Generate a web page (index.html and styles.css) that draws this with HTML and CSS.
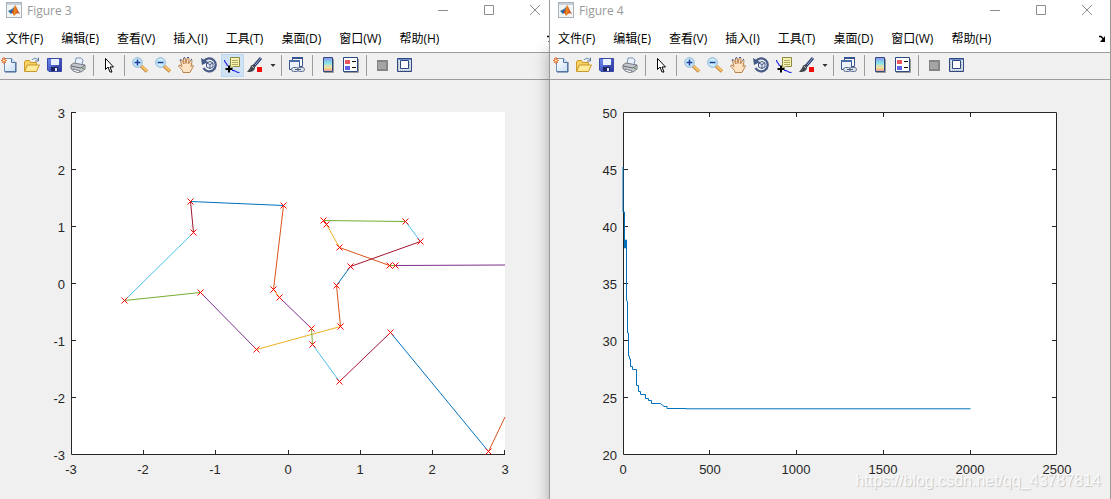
FILE: index.html
```html
<!DOCTYPE html>
<html lang="zh-CN">
<head>
<meta charset="utf-8">
<title>Figures</title>
<link rel="stylesheet" href="styles.css">
</head>
<body>
<svg class="sprite" aria-hidden="true">
  <defs>
    <linearGradient id="g-page" x1="0" y1="0" x2="1" y2="1"><stop offset="0" stop-color="#fff"/><stop offset="1" stop-color="#c9e0f5"/></linearGradient>
    <linearGradient id="g-bar" x1="0" y1="0" x2="0" y2="1"><stop offset="0" stop-color="#8d8fee"/><stop offset=".4" stop-color="#86e3ea"/><stop offset=".7" stop-color="#f4e39a"/><stop offset="1" stop-color="#f3a08c"/></linearGradient>
    <linearGradient id="g-save" x1="0" y1="0" x2="1" y2="1"><stop offset="0" stop-color="#6f8df0"/><stop offset="1" stop-color="#25319b"/></linearGradient>
    <linearGradient id="g-logo" x1="0" y1="0" x2="1" y2="0"><stop offset="0" stop-color="#8b1a10"/><stop offset=".4" stop-color="#f08a24"/><stop offset="1" stop-color="#b5331a"/></linearGradient>
  </defs>
  <symbol id="i-logo" viewBox="0 0 16 16"><rect x=".5" y=".5" width="15" height="15" fill="#f3f5f7" stroke="#a9b0b8"/><path d="M1 1h14v2H1z" fill="#c7d0da"/><path d="M2 9l4-2 3-3-1 5-3 3z" fill="#2b6fa8"/><path d="M5 10l2-2 2-5c2 2 3 7 5 9-2-1-3-1-4 0l-2 2c-1-2-1-3-3-4z" fill="url(#g-logo)"/></symbol>
  <symbol id="i-new" viewBox="0 0 16 16"><path d="M3.500 1.500h7l4 4v9h-11z" fill="url(#g-page)" stroke="#6f8fb8"/><path d="M15 5v10H4" fill="none" stroke="#3d5f90"/><path d="M10.500 1.500v4h4" fill="#dbe9f7" stroke="#4f74a8"/><path d="M3 0v7M0 3.500h6M1 1l4 5M5 1L1 6" stroke="#e0743a" stroke-width="1"/><circle cx="3" cy="3.500" r="1.500" fill="#fff0a8" stroke="#e0743a"/></symbol>
  <symbol id="i-open" viewBox="0 0 16 16"><path d="M.5 14V4.500l1-1h4l1 2h6V14z" fill="#f7cf63" stroke="#c99a2a"/><path d="M.5 14.500l3-6.500h12l-3 6.500z" fill="#ffeb9a" stroke="#c99a2a"/><path d="M8 3c2-2.500 4-2 6 0M14.500.500V4H11" fill="none" stroke="#5b7ba5"/></symbol>
  <symbol id="i-save" viewBox="0 0 16 16"><path d="M.5 1.500h14v13H2L.5 13z" fill="url(#g-save)" stroke="#3a48a5"/><path d="M4 2h8v6H4z" fill="#eaf1ff"/><path d="M4 10h7v4H4z" fill="#1d2560"/><path d="M8 11h2v3H8z" fill="#e9edfa"/></symbol>
  <symbol id="i-print" viewBox="0 0 16 16"><path d="M5 7l1-6h5l2 2-1 5z" fill="#e8f1fc" stroke="#7f93b3"/><path d="M1 8l3-2 11 2v4l-4 3-10-3z" fill="#c3c6cb" stroke="#777b82"/><path d="M1 9l10 2 4-3" fill="none" stroke="#666b73"/><path d="M3 12l7 2-1 2-6-2z" fill="#fff" stroke="#7b7f86"/><path d="M12 11h2v1h-2z" fill="#6eaf4c"/></symbol>
  <symbol id="i-cursor" viewBox="0 0 16 16"><path d="M4.500 1.500v11l2.500-2.500 2 5h2l-2-5h3.500z" fill="#fff" stroke="#000"/></symbol>
  <symbol id="i-zoomin" viewBox="0 0 16 16"><path d="M9 9l6 5.500" stroke="#c98a3c" stroke-width="3.500"/><path d="M9.500 9l5.500 5" stroke="#f7c26c" stroke-width="2"/><circle cx="5.500" cy="5.500" r="4.800" fill="#c8ecfb" stroke="#8ab3d8"/><path d="M2.500 5.500h6M5.500 2.500v6" stroke="#1d3c9a" stroke-width="1.500"/></symbol>
  <symbol id="i-zoomout" viewBox="0 0 16 16"><path d="M9 9l6 5.500" stroke="#c98a3c" stroke-width="3.500"/><path d="M9.500 9l5.500 5" stroke="#f7c26c" stroke-width="2"/><circle cx="5.500" cy="5.500" r="4.800" fill="#c8ecfb" stroke="#8ab3d8"/><path d="M2.500 5.500h6" stroke="#1d3c9a" stroke-width="1.500"/></symbol>
  <symbol id="i-hand" viewBox="0 0 16 16"><path d="M5 15.500c0-3-3-4-4.500-6.500.5-1.500 2-1 3.500.5L2.500 4c.5-1.500 1.500-1.500 2 0L6 7 5.500 2c.5-1.500 2-1.500 2 0L8 6.500 9 1.500c.5-1 2-1 2 .5L10.500 7 12.500 3.500c1-1 2 0 1.500 1L13 9.500c1-1.500 2.500-1.500 2.500-.5-1.500 2-2 4-3.500 6.500z" fill="#ffe2c2" stroke="#b9824f"/><path d="M2 4l1-2M5 1.500l2-1M9 .5h2M12.500 3l1.500-1" stroke="#3c5a9c"/></symbol>
  <symbol id="i-rotate" viewBox="0 0 16 16"><path d="M3 4a6.500 6.500 0 1 1-.5 7" fill="none" stroke="#455a86" stroke-width="2.200"/><path d="M0 1l1 7 6-3z" fill="#455a86"/><path d="M5.500 6l3.500-1.500L12 6v4l-3 1.500L5.500 10zM5.500 6L9 7.500 12 6M9 7.500v4" fill="#e5edf8" stroke="#455a86"/></symbol>
  <symbol id="i-tip" viewBox="0 0 16 16"><path d="M.5 3c0 3 2 2 3 6M8 13.500c3-1 3 2 7.500 2" fill="none" stroke="#2323e6" stroke-width="1.200"/><path d="M6.500 .5h9v9h-6l-2.500 2V9.500h-.5z" fill="#f5f2b0" stroke="#8d8a45"/><path d="M8 3.500h6M8 5.500h6M8 7.500h6" stroke="#b0ab66"/><path d="M1.500 12h7M5 8.500v7" stroke="#000" stroke-width="2"/></symbol>
  <symbol id="i-brush" viewBox="0 0 16 16"><path d="M14 1L7 9" stroke="#30406d" stroke-width="3"/><path d="M14 1L8 8" stroke="#93a5dd"/><path d="M8 8c-3-1-4 0-5 3l-3 4c4 0 7 0 8-4z" fill="#444951"/><path d="M5 9l2 2" stroke="#bcc2cc"/><path d="M10 10h5v5h-5z" fill="#f20b0b"/></symbol>
  <symbol id="i-link" viewBox="0 0 16 16"><path d="M3.500 .5h10v9h-10z" fill="#fff" stroke="#35558c"/><path d="M3 0h11v2H3z" fill="#35558c"/><path d="M.5 3.500h10v9H.5z" fill="#edf3fc" stroke="#35558c"/><path d="M0 3h11v2H0z" fill="#4a6ba6"/><rect x="2.500" y="10.500" width="7" height="4" rx="2" fill="#d9e2ef" stroke="#65748e"/><rect x="8.500" y="10.500" width="7" height="4" rx="2" fill="#d9e2ef" stroke="#65748e"/><path d="M6 12.500h6" stroke="#4e5b72"/></symbol>
  <symbol id="i-colorbar" viewBox="0 0 16 16"><path d="M13.500 2v13.500H4" fill="none" stroke="#9b9b9b"/><path d="M3.500 .5h9v14h-9z" fill="url(#g-bar)" stroke="#2e4880"/></symbol>
  <symbol id="i-legend" viewBox="0 0 16 16"><path d="M1 15.500h14.500V2" fill="none" stroke="#9b9b9b"/><path d="M.5 .5h14v14H.5z" fill="#fff" stroke="#2e4880"/><path d="M2 3h5v4H2z" fill="#ea5757"/><path d="M2 9h5v4H2z" fill="#6262ec"/><path d="M9 4.500h4M9 10.500h4" stroke="#111"/></symbol>
  <symbol id="i-hide" viewBox="0 0 16 16"><path d="M3 3h11v11H3z" fill="#858585"/><path d="M4 5h8v7H4z" fill="#a5a5a5"/></symbol>
  <symbol id="i-dock" viewBox="0 0 16 16"><path d="M.5 1.500h14v13H.5z" fill="#dce2eb" stroke="#2e4880"/><path d="M1 2h13v1H1z" fill="#6f8fca"/><path d="M1 5.500h2M12 5.500h2M1 7.500h2M12 7.500h2M1 9.500h2M12 9.500h2M1 11.500h2M12 11.500h2M1 13.500h13" stroke="#a6b0c0" stroke-dasharray="1 1"/><path d="M3.500 3.500h8v8h-8z" fill="#fff" stroke="#2e4880"/></symbol>
  <symbol id="i-min" viewBox="0 0 12 12"><path d="M1 6.500h10" stroke="#8d8d8d"/></symbol>
  <symbol id="i-max" viewBox="0 0 12 12"><path d="M1.500 1.500h9v9h-9z" fill="none" stroke="#8d8d8d"/></symbol>
  <symbol id="i-close" viewBox="0 0 12 12"><path d="M1 1l10 10M11 1L1 11" stroke="#8d8d8d"/></symbol>
  <symbol id="i-undock" viewBox="0 0 8 8"><path d="M1 1.500h2l3 3" fill="none" stroke="#000" stroke-width="1.500"/><path d="M7 1v6H2z" fill="#000"/></symbol>
  <symbol id="i-caret" viewBox="0 0 8 8"><path d="M1.500 3h5L4 6z" fill="#333"/></symbol>
</svg>

<main class="desktop">
  <section class="window window-back">
    <header class="titlebar">
      <svg class="icon"><use href="#i-logo"/></svg>
      <h1 class="title">Figure 3</h1>
      <button class="control" aria-label="最小化"><svg><use href="#i-min"/></svg></button>
      <button class="control" aria-label="最大化"><svg><use href="#i-max"/></svg></button>
      <button class="control" aria-label="关闭"><svg><use href="#i-close"/></svg></button>
    </header>
    <nav class="menubar">
      <button>文件(F)</button><button>编辑(E)</button><button>查看(V)</button><button>插入(I)</button><button>工具(T)</button><button>桌面(D)</button><button>窗口(W)</button><button>帮助(H)</button>
      <button class="undock" aria-label="停靠"><svg><use href="#i-undock"/></svg></button>
    </nav>
    <div class="toolbar" role="toolbar">
      <button class="tool" aria-label="新建"><svg class="icon"><use href="#i-new"/></svg></button>
      <button class="tool" aria-label="打开"><svg class="icon"><use href="#i-open"/></svg></button>
      <button class="tool" aria-label="保存"><svg class="icon"><use href="#i-save"/></svg></button>
      <button class="tool" aria-label="打印"><svg class="icon"><use href="#i-print"/></svg></button>
      <span class="sep"></span>
      <button class="tool" aria-label="编辑绘图"><svg class="icon"><use href="#i-cursor"/></svg></button>
      <span class="sep"></span>
      <button class="tool" aria-label="放大"><svg class="icon"><use href="#i-zoomin"/></svg></button>
      <button class="tool" aria-label="缩小"><svg class="icon"><use href="#i-zoomout"/></svg></button>
      <button class="tool" aria-label="平移"><svg class="icon"><use href="#i-hand"/></svg></button>
      <button class="tool" aria-label="三维旋转"><svg class="icon"><use href="#i-rotate"/></svg></button>
      <button class="tool active" aria-label="数据游标" aria-pressed="true"><svg class="icon"><use href="#i-tip"/></svg></button>
      <button class="tool" aria-label="刷亮"><svg class="icon"><use href="#i-brush"/></svg></button>
      <button class="caret" aria-label="刷亮选项"><svg><use href="#i-caret"/></svg></button>
      <span class="sep"></span>
      <button class="tool" aria-label="链接绘图"><svg class="icon"><use href="#i-link"/></svg></button>
      <span class="sep"></span>
      <button class="tool" aria-label="颜色栏"><svg class="icon"><use href="#i-colorbar"/></svg></button>
      <button class="tool" aria-label="图例"><svg class="icon"><use href="#i-legend"/></svg></button>
      <span class="sep"></span>
      <button class="tool" aria-label="隐藏绘图工具"><svg class="icon"><use href="#i-hide"/></svg></button>
      <button class="tool" aria-label="显示绘图工具"><svg class="icon"><use href="#i-dock"/></svg></button>
    </div>
    <svg class="plot" viewBox="0 80 549 419" role="img" aria-label="Figure 3">
      <path class="area" d="M71 112h434v343H71z"/>
      <g class="series">
        <path class="c1" d="M190.500 201.500L283.500 205.500M336.500 285.500L350.500 266.500M390.500 332.500L488.500 451.500"/>
        <path class="c2" d="M283.500 205.500L273.500 289.500M340.500 326.500L336.500 285.500M339.500 247.500L389.500 265.500M488.500 451.500L505 417"/>
        <path class="c3" d="M273.500 289.500L279.500 297.500M256.500 349.500L340.500 326.500M326.500 224.500L339.500 247.500"/>
        <path class="c4" d="M279.500 297.500L311.500 328.500M200.500 292.500L256.500 349.500M323.500 220.500L326.500 224.500M395.500 265.500L505 265"/>
        <path class="c5" d="M311.500 328.500L312.500 344.500M124.500 300.500L200.500 292.500M323.500 220.500L405.500 221.500M389.500 265.500H395.500"/>
        <path class="c6" d="M312.500 344.500L339.500 381.500M193.500 232.500L124.500 300.500M405.500 221.500L420.500 241.500"/>
        <path class="c7" d="M339.500 381.500L390.500 332.500M190.500 201.500L193.500 232.500M420.500 241.500L350.500 266.500"/>
      </g>
      <path class="axis" d="M71.500 112V454.500H505M71 112.500h5M71 169.500h5M71 226.500h5M71 283.500h5M71 340.500h5M71 397.500h5M143.500 454v-4M215.500 454v-4M288.500 454v-4M360.500 454v-4M432.500 454v-4M504.500 454v-4"/>
      <path class="marks" d="M187.500 198.500l6 6m0-6l-6 6M280.500 202.500l6 6m0-6l-6 6M270.500 286.500l6 6m0-6l-6 6M276.500 294.500l6 6m0-6l-6 6M308.500 325.500l6 6m0-6l-6 6M309.500 341.500l6 6m0-6l-6 6M336.500 378.500l6 6m0-6l-6 6M387.500 329.500l6 6m0-6l-6 6M485.500 448.500l6 6m0-6l-6 6M190.500 229.500l6 6m0-6l-6 6M121.500 297.500l6 6m0-6l-6 6M197.500 289.500l6 6m0-6l-6 6M253.500 346.500l6 6m0-6l-6 6M337.500 323.500l6 6m0-6l-6 6M333.500 282.500l6 6m0-6l-6 6M347.500 263.500l6 6m0-6l-6 6M417.500 238.500l6 6m0-6l-6 6M402.500 218.500l6 6m0-6l-6 6M320.500 217.500l6 6m0-6l-6 6M323.500 221.500l6 6m0-6l-6 6M336.500 244.500l6 6m0-6l-6 6M386.500 262.500l6 6m0-6l-6 6M392.500 262.500l6 6m0-6l-6 6"/>
      <g class="ylabels"><text x="65" y="118">3</text><text x="65" y="175">2</text><text x="65" y="232">1</text><text x="65" y="289">0</text><text x="65" y="346">-1</text><text x="65" y="403">-2</text><text x="65" y="460">-3</text></g>
      <g class="xlabels"><text x="71" y="474">-3</text><text x="143" y="474">-2</text><text x="215" y="474">-1</text><text x="288" y="474">0</text><text x="360" y="474">1</text><text x="432" y="474">2</text><text x="505" y="474">3</text></g>
    </svg>
  </section>

  <section class="window window-front">
    <header class="titlebar">
      <svg class="icon"><use href="#i-logo"/></svg>
      <h1 class="title">Figure 4</h1>
      <button class="control" aria-label="最小化"><svg><use href="#i-min"/></svg></button>
      <button class="control" aria-label="最大化"><svg><use href="#i-max"/></svg></button>
      <button class="control" aria-label="关闭"><svg><use href="#i-close"/></svg></button>
    </header>
    <nav class="menubar">
      <button>文件(F)</button><button>编辑(E)</button><button>查看(V)</button><button>插入(I)</button><button>工具(T)</button><button>桌面(D)</button><button>窗口(W)</button><button>帮助(H)</button>
      <button class="undock" aria-label="停靠"><svg><use href="#i-undock"/></svg></button>
    </nav>
    <div class="toolbar" role="toolbar">
      <button class="tool" aria-label="新建"><svg class="icon"><use href="#i-new"/></svg></button>
      <button class="tool" aria-label="打开"><svg class="icon"><use href="#i-open"/></svg></button>
      <button class="tool" aria-label="保存"><svg class="icon"><use href="#i-save"/></svg></button>
      <button class="tool" aria-label="打印"><svg class="icon"><use href="#i-print"/></svg></button>
      <span class="sep"></span>
      <button class="tool" aria-label="编辑绘图"><svg class="icon"><use href="#i-cursor"/></svg></button>
      <span class="sep"></span>
      <button class="tool" aria-label="放大"><svg class="icon"><use href="#i-zoomin"/></svg></button>
      <button class="tool" aria-label="缩小"><svg class="icon"><use href="#i-zoomout"/></svg></button>
      <button class="tool" aria-label="平移"><svg class="icon"><use href="#i-hand"/></svg></button>
      <button class="tool" aria-label="三维旋转"><svg class="icon"><use href="#i-rotate"/></svg></button>
      <button class="tool" aria-label="数据游标"><svg class="icon"><use href="#i-tip"/></svg></button>
      <button class="tool" aria-label="刷亮"><svg class="icon"><use href="#i-brush"/></svg></button>
      <button class="caret" aria-label="刷亮选项"><svg><use href="#i-caret"/></svg></button>
      <span class="sep"></span>
      <button class="tool" aria-label="链接绘图"><svg class="icon"><use href="#i-link"/></svg></button>
      <span class="sep"></span>
      <button class="tool" aria-label="颜色栏"><svg class="icon"><use href="#i-colorbar"/></svg></button>
      <button class="tool" aria-label="图例"><svg class="icon"><use href="#i-legend"/></svg></button>
      <span class="sep"></span>
      <button class="tool" aria-label="隐藏绘图工具"><svg class="icon"><use href="#i-hide"/></svg></button>
      <button class="tool" aria-label="显示绘图工具"><svg class="icon"><use href="#i-dock"/></svg></button>
    </div>
    <svg class="plot" viewBox="550 80 560 419" role="img" aria-label="Figure 4">
      <path class="area" d="M623 112h434v343H623z"/>
      <path class="axis" d="M623.500 112.500H1056.500V454.500H623.500zM623 169.500h5M623 226.500h5M623 283.500h5M623 340.500h5M623 397.500h5M1057 169.500h-5M1057 226.500h-5M1057 283.500h-5M1057 340.500h-5M1057 397.500h-5M709.500 454v-4M796.500 454v-4M883.500 454v-4M970.500 454v-4M709.500 112v5M796.500 112v5M883.500 112v5M970.500 112v5"/>
      <path class="series c1" d="M623 167V212H624.500V248H625.500V240H626.500V300L627.500 302V333H628.500V356H629.500V359H630.500V366.500H632.500V369.500H636.500V385.500H638.500V391.500H640.500V394.500H645.500V398.500H648.500V400.500H651.500V403.500H660.500L664 406.500H667V408.500H686V408.800H970.500"/>
      <g class="ylabels"><text x="617" y="118">50</text><text x="617" y="175">45</text><text x="617" y="232">40</text><text x="617" y="289">35</text><text x="617" y="346">30</text><text x="617" y="403">25</text><text x="617" y="460">20</text></g>
      <g class="xlabels"><text x="623" y="474">0</text><text x="710" y="474">500</text><text x="796" y="474">1000</text><text x="883" y="474">1500</text><text x="970" y="474">2000</text><text x="1057" y="474">2500</text></g>
    </svg>
    <p class="watermark">https://blog.csdn.net/qq_43787814</p>
  </section>
</main>
</body>
</html>
```
FILE: styles.css
```css
* { box-sizing: border-box; }

body {
  margin: 0;
  background: #f0f0f0;
  font: 12px/16px "Open Sans", "Noto Sans CJK SC", sans-serif;
  color: #000;
}

button {
  display: flex;
  align-items: center;
  justify-content: center;
  margin: 0;
  padding: 0;
  border: 0;
  background: none;
  color: inherit;
  font: inherit;
}

.sprite { position: absolute; width: 0; height: 0; }
.icon { display: block; width: 16px; height: 16px; flex: none; }

.desktop {
  display: grid;
  grid-template-columns: 549fr 562fr;
  min-height: 100vh;
  overflow: hidden;
}

.window {
  position: relative;
  min-width: 0;
  background: #f0f0f0;
}

.window-back { --inset: 0px; --covered: -9px; }

.window-front {
  --inset: 2px;
  --covered: 0px;
  z-index: 1;
  border: solid #9a9a9a;
  border-width: 0 1px;
  box-shadow: 0 50px 14px rgba(0, 0, 0, 0.3);
}

.titlebar {
  display: flex;
  align-items: center;
  height: 22px;
  margin-right: var(--covered);
  padding-left: calc(6px + var(--inset));
  padding-bottom: 2px;
  background: #fff;
}

.title {
  flex: 1;
  margin: 2px 0 0 5px;
  color: #999;
  font-size: 12px;
  font-weight: 400;
}

.control { width: 46px; height: 20px; }
.control svg { width: 12px; height: 12px; }

.menubar {
  display: flex;
  align-items: center;
  gap: 18px;
  height: 30px;
  margin-right: var(--covered);
  padding: 4px 4px 0 calc(6px + var(--inset));
  background: #fff;
  white-space: nowrap;
}

.undock { margin-left: auto; }
.undock svg { width: 8px; height: 8px; }

.toolbar {
  display: flex;
  align-items: center;
  height: 28px;
  padding: 0 0 2px var(--inset);
  border: solid #9c9c9c;
  border-width: 1px 0;
}

.tool { width: 23px; height: 23px; padding-right: 1px; flex: none; }
.tool:first-child { margin-left: -2px; }
.active { background: #cfe3f5; box-shadow: inset 0 0 0 1px #bcd8f0; }
.caret { width: 11px; height: 23px; flex: none; }
.caret svg { width: 8px; height: 8px; }

.sep {
  flex: none;
  width: 1px;
  height: 21px;
  margin: 0 4px 0 3px;
  background: #9c9c9c;
}

.plot { display: block; width: 100%; height: auto; }
.area { fill: #fff; }
.axis { fill: none; stroke: #262626; }
.series { fill: none; stroke-width: 1px; }
.marks { fill: none; stroke: #f00; }
.c1 { stroke: #0072bd; }
.c2 { stroke: #d95319; }
.c3 { stroke: #edb120; }
.c4 { stroke: #7e2f8e; }
.c5 { stroke: #77ac30; }
.c6 { stroke: #4dbeee; }
.c7 { stroke: #a2142f; }

.ylabels, .xlabels {
  fill: #262626;
  font: 13px "Liberation Sans", Arial, sans-serif;
}
.ylabels { text-anchor: end; }
.xlabels { text-anchor: middle; }

.watermark {
  position: absolute;
  right: 9px;
  bottom: 9px;
  margin: 0;
  color: rgba(255, 255, 255, 0.85);
  font: 16px/18px "Liberation Sans", Arial, sans-serif;
  text-shadow: 1px 1px 1px rgba(0, 0, 0, 0.18);
}
```
